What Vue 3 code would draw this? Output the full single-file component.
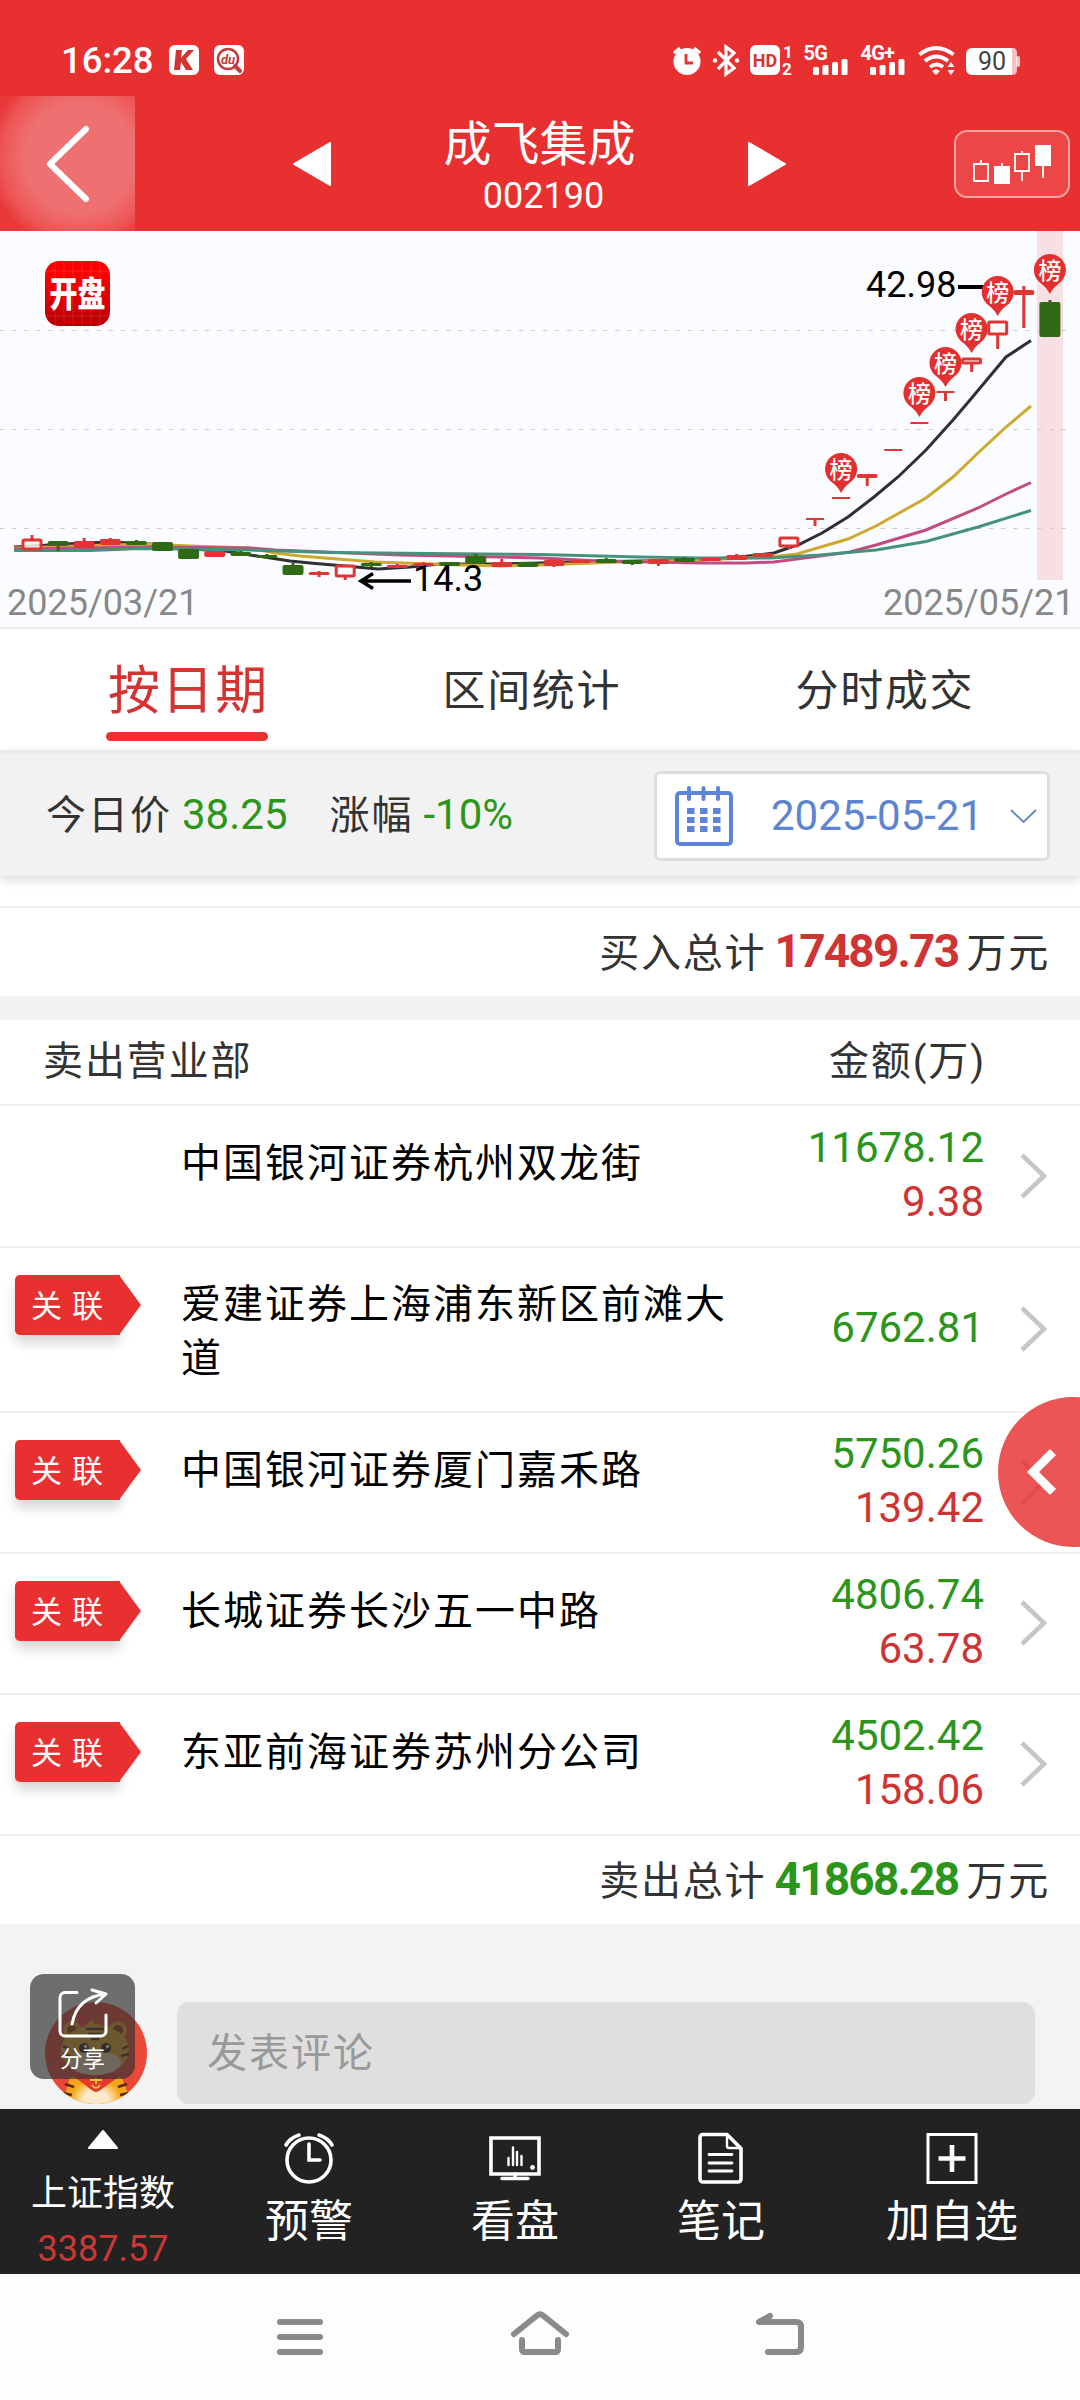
<script setup>
import { ref } from 'vue';

const tabs = ref(['按日期', '区间统计', '分时成交']);
const activeTab = ref(0);

const sellers = ref([
  { name: '中国银河证券杭州双龙街', sell: '11678.12', buy: '9.38', linked: false },
  { name: '爱建证券上海浦东新区前滩大道', sell: '6762.81', buy: '', linked: true, tall: true },
  { name: '中国银河证券厦门嘉禾路', sell: '5750.26', buy: '139.42', linked: true },
  { name: '长城证券长沙五一中路', sell: '4806.74', buy: '63.78', linked: true },
  { name: '东亚前海证券苏州分公司', sell: '4502.42', buy: '158.06', linked: true }
]);

// [type, top, bottom, wick top, wick bottom]
// r = red, g = green, h = hollow red, t = thin line
const candles = [
  ['h', 539, 550, 535, 539],
  ['g', 541, 546, 541, 551],
  ['r', 541, 548, 538, 548],
  ['r', 539, 545, 538, 545],
  ['g', 541, 545, 540, 545],
  ['g', 542, 551, 542, 551],
  ['g', 549, 559, 549, 559],
  ['r', 551, 557, 551, 557],
  ['g', 552, 556, 551, 556],
  ['g', 555, 558, 554, 559],
  ['g', 565, 575, 563, 575],
  ['r', 572, 575, 571, 577],
  ['h', 565, 577, 577, 580],
  ['g', 563, 566, 562, 567],
  ['r', 565, 568, 564, 568],
  ['r', 563, 566, 562, 566],
  ['g', 562, 566, 562, 566],
  ['g', 556, 564, 554, 564],
  ['r', 562, 567, 559, 567],
  ['g', 562, 567, 562, 567],
  ['r', 560, 566, 560, 567],
  ['r', 560, 563, 560, 563],
  ['g', 559, 563, 558, 563],
  ['g', 560, 564, 560, 565],
  ['r', 559, 564, 559, 566],
  ['g', 558, 562, 557, 562],
  ['r', 558, 561, 558, 561],
  ['r', 555, 560, 554, 560],
  ['r', 553, 557, 553, 557],
  ['h', 537, 547, 547, 549],
  ['t', 518, 520, 519, 526],
  ['t', 497, 499, 498, 498],
  ['r', 474, 478, 475, 486],
  ['t', 449, 451, 450, 450],
  ['t', 422, 424, 423, 423],
  ['t', 391, 393, 392, 401],
  ['h', 358, 364, 364, 372],
  ['h', 321, 335, 335, 349],
  ['r', 290, 295, 286, 328],
  ['g', 302, 337, 300, 337]
];

const centerX = (i) => 32 + 26.1 * i;
const halfWidth = (type) => (type === 't' ? 9 : 10.5);
const candleColor = (type) => (type === 'g' ? '#306a14' : '#e03535');

// index of the candle and the height of the pin above it
const pins = [
  [31, 469],
  [34, 393],
  [35, 363],
  [36, 329],
  [37, 292],
  [39, 270]
];

const averages = [
  {
    color: '#2f3033',
    points: '14,547 32,546 84,543 110,542 150,544 190,549 225,551 250,555 290,561 310,563 345,566 378,569 410,567 440,564 500,564 540,563 640,561 700,560 740,557 774,553 800,544 822,533 848,517 874,497 898,477 926,450 953,420 970,400 1006,357 1031,340.5'
  },
  {
    color: '#cfa92f',
    points: '14,548 110,545 150,544 190,546 250,548 275,553 300,556 350,560 375,562 430,564 500,566 540,565 620,562 700,560 770,557 797,554 848,539 876,526 926,498 953,477 978,453 1006,427 1031,406'
  },
  {
    color: '#c14b82',
    points: '14,549 150,547 250,548 275,550 400,555 500,557 540,558 600,561 700,563 746,563 774,562 850,552 876,545 926,530 978,508 1006,494 1031,482.5'
  },
  {
    color: '#46937c',
    points: '14,550.5 90,550.5 140,548.5 250,550 330,552.5 430,553.5 540,554.5 640,557 700,558 770,558 820,555 876,550 926,541.5 978,527 1031,510.5'
  }
];
</script>

<template>
  <div class="screen">
    <div class="status">
      <span class="time">16:28</span>
      <svg class="app_badge" width="30" height="30" viewBox="0 0 30 30">
        <rect width="30" height="30" rx="6" fill="#fff" />
        <path d="M7 5h6l-1 8 7-8h6l-8 9 7 11h-7l-5-8-1 8H5z" fill="#d23434" />
      </svg>
      <svg class="app_badge second" width="30" height="30" viewBox="0 0 30 30">
        <rect width="30" height="30" rx="6" fill="#fff" />
        <circle cx="14" cy="14" r="10" fill="none" stroke="#c43b3b" stroke-width="2.500" />
        <path d="M21 21l5 5" stroke="#c43b3b" stroke-width="4" stroke-linecap="round" />
        <text x="14" y="18.500" text-anchor="middle" class="du">du</text>
      </svg>
      <svg class="status_icons" width="360" height="46" viewBox="668 37 360 46">
        <g fill="#fff">
          <circle cx="687" cy="61.500" r="13.500" />
          <path d="M674 53l6-5M700 53l-6-5" stroke="#fff" stroke-width="3.200" />
          <path d="M686 54v9h7" stroke="#e83030" stroke-width="2.800" fill="none" />
          <path d="M718 52l16 16-8 6V47l8 6-16 16" stroke="#fff" stroke-width="3.200" fill="none" />
          <circle cx="715" cy="60.500" r="2.200" />
          <circle cx="737" cy="60.500" r="2.200" />
          <rect x="750" y="45" width="30" height="30" rx="6" />
          <text x="765" y="67" text-anchor="middle" class="hd">HD</text>
          <text x="783" y="57.500" class="sim">1</text>
          <text x="782" y="74.500" class="sim">2</text>
          <text x="803.500" y="60" class="net">5G</text>
          <text x="860.500" y="60" class="net">4G+</text>
          <g v-for="x in [813, 870]" :key="x">
            <rect :x="x" y="67" width="6" height="8" rx="1.500" />
            <rect :x="x + 9.5" y="65" width="6" height="10" rx="1.500" />
            <rect :x="x + 19" y="62" width="6" height="13" rx="1.500" />
            <rect :x="x + 28.5" y="59" width="6" height="16" rx="1.500" />
          </g>
          <g fill="none" stroke="#fff" stroke-width="4">
            <path d="M919.500 54.500q16.500-13 34 0" />
            <path d="M925 61q11.500-9 23 0" />
            <path d="M930 67q6.500-5 13 0" />
          </g>
          <path d="M932 71l4-2 4 2-4 4z" />
          <path d="M951 62l3.500 5h-7zM951 75l3.500-5h-7z" />
          <rect x="1010" y="48" width="7" height="27" rx="5" opacity="0.700" />
          <rect x="1016" y="56" width="4" height="11" rx="2" opacity="0.700" />
          <path d="M972 48h40v27h-40a6 6 0 0 1-6-6V54a6 6 0 0 1 6-6z" />
          <text x="992" y="70" text-anchor="middle" class="battery">90</text>
        </g>
      </svg>
    </div>

    <header class="header">
      <div class="back">
        <svg width="50" height="80" viewBox="0 0 50 80">
          <path d="M43 5L7 40l36 35" fill="none" stroke="#fff" stroke-width="6" stroke-linecap="round" stroke-linejoin="round" />
        </svg>
      </div>
      <svg class="prev" width="38" height="44" viewBox="0 0 38 44"><path d="M37 1v42L1 22z" fill="#fff" stroke="#fff" stroke-width="2" stroke-linejoin="round" /></svg>
      <div class="stock">
        <div class="stock_name">成飞集成</div>
        <div class="stock_code">002190</div>
      </div>
      <svg class="next" width="38" height="44" viewBox="0 0 38 44"><path d="M1 1v42l36-21z" fill="#fff" stroke="#fff" stroke-width="2" stroke-linejoin="round" /></svg>
      <div class="chart_button">
        <svg width="80" height="42" viewBox="0 0 80 42">
          <g fill="none" stroke="#fff" stroke-width="1.800">
            <path d="M2 21h14v17H2zM9 21v-4M43 11h14v17H43zM50 11V8M50 28v10" />
            <path d="M30 24v-4M71 23v12" />
          </g>
          <path d="M22 23h16v18H22zM63 2h16v21H63z" fill="#fff" />
        </svg>
      </div>
    </header>

    <svg class="chart" width="1080" height="396" viewBox="0 231 1080 396">
      <defs>
        <linearGradient id="logo" x1="0" y1="0" x2="0" y2="1">
          <stop offset="0.200" stop-color="#fb0000" />
          <stop offset="1" stop-color="#b80005" />
        </linearGradient>
      </defs>
      <rect x="1037" y="231" width="26" height="349" fill="#f8dfe4" />
      <line v-for="y in [330.5, 429.5, 528.5]" :key="y" x1="0" :y1="y" x2="1074" :y2="y" stroke="#cccdd2" stroke-width="1" stroke-dasharray="4.500 7.560" />
      <rect x="45" y="261" width="65" height="65" rx="14" fill="url(#logo)" />
      <path d="M55 261v65M64 261v65M73 261v65M82 261v65M91 261v65M100 261v65M45 271h65M45 316h65" stroke="#fff" stroke-opacity="0.120" />
      <text transform="translate(77.500 306.500) scale(1 1.250)" text-anchor="middle" class="logo_text">开盘</text>

      <polyline v-for="line in averages" :key="line.color" :points="line.points" fill="none" :stroke="line.color" stroke-width="3" />
      <g v-for="(c, i) in candles" :key="i">
        <line :x1="centerX(i)" :x2="centerX(i)" :y1="c[3]" :y2="c[4]" :stroke="candleColor(c[0])" stroke-width="3" />
        <rect v-if="c[0] === 'h'" :x="centerX(i) - 9" :y="c[1] + 1" width="18" :height="c[2] - c[1] - 2" rx="1" fill="#fbfcff" fill-opacity="0.800" :stroke="candleColor(c[0])" stroke-width="3" />
        <rect v-else :x="centerX(i) - halfWidth(c[0])" :y="c[1]" :width="halfWidth(c[0]) * 2" :height="c[2] - c[1]" :rx="c[0] === 't' ? 0 : 2" :fill="candleColor(c[0])" />
      </g>

      <line x1="958" x2="988" y1="287" y2="287" stroke="#000" stroke-width="4" />
      <text x="866" y="297" class="price">42.98</text>
      <path d="M411 581h-49M373 573.500l-12 7.500 12 7.500" fill="none" stroke="#000" stroke-width="3.500" />
      <text x="413" y="590.500" class="price">14.3</text>

      <g v-for="pin in pins" :key="pin[0]">
        <path :transform="`translate(${centerX(pin[0])} ${pin[1]})`" d="M-12 10.500C-7 15-3 18 0 24C3 18 7 15 12 10.500z" fill="#e32f2f" />
        <circle :cx="centerX(pin[0])" :cy="pin[1]" r="16" fill="#e32f2f" />
        <text :x="centerX(pin[0])" :y="pin[1] + 8.5" text-anchor="middle" class="pin_text">榜</text>
      </g>

      <text x="7" y="615" class="date_label">2025/03/21</text>
      <text x="1074.500" y="615" text-anchor="end" class="date_label">2025/05/21</text>
    </svg>

    <nav class="tabs">
      <div v-for="(tab, index) in tabs" :key="tab" class="tab" :class="{ active: index === activeTab }" @click="activeTab = index">
        <span>{{ tab }}</span>
      </div>
    </nav>

    <div class="info">
      <span class="label">今日价</span>
      <span class="value">38.25</span>
      <span class="label change">涨幅</span>
      <span class="value">-10%</span>
      <div class="date_box">
        <svg width="60" height="62" viewBox="0 0 60 62">
          <g fill="none" stroke="#5d84d8" stroke-width="4" stroke-linecap="round">
            <rect x="3" y="8" width="54" height="51" rx="3" />
            <path d="M15 3v11M29.500 3v11M44 3v11" />
          </g>
          <g fill="#5d84d8">
            <template v-for="y in [23, 32, 41]" :key="y">
              <rect v-for="x in [13, 26, 39]" :key="x" :x="x" :y="y" width="7.500" height="6" />
            </template>
          </g>
        </svg>
        <span class="date">2025-05-21</span>
        <svg class="arrow" width="27" height="16" viewBox="0 0 27 16">
          <path d="M1 2l12.500 12L26 2" fill="none" stroke="#5d84c8" stroke-width="1.800" />
        </svg>
      </div>
    </div>

    <div class="gap_row"></div>
    <div class="total">
      <span>买入总计</span><b class="red">17489.73</b><span>万元</span>
    </div>

    <div class="list_head">
      <span>卖出营业部</span>
      <span>金额(万)</span>
    </div>
    <div v-for="item in sellers" :key="item.name" class="row" :class="{ tall: item.tall, plain: !item.linked }">
      <div class="tag_cell">
        <div v-if="item.linked" class="tag">
          <span>关联</span>
        </div>
      </div>
      <p class="name">{{ item.name }}</p>
      <div class="amount">
        <div class="green">{{ item.sell }}</div>
        <div v-if="item.buy" class="red">{{ item.buy }}</div>
      </div>
      <svg class="more" width="28" height="48" viewBox="0 0 28 48">
        <path d="M2 3l22 21L2 45" fill="none" stroke="#c6c6c6" stroke-width="4.500" />
      </svg>
    </div>
    <div class="total">
      <span>卖出总计</span><b class="green">41868.28</b><span>万元</span>
    </div>

    <div class="comment">
      <svg class="avatar" width="102" height="102" viewBox="0 0 102 102">
        <defs>
          <clipPath id="round"><circle cx="51" cy="51" r="51" /></clipPath>
          <radialGradient id="belly"><stop offset="0.500" stop-color="#fbe9cc" /><stop offset="1" stop-color="#f6a91c" /></radialGradient>
        </defs>
        <g clip-path="url(#round)">
          <rect width="102" height="102" fill="#ea4937" />
          <path d="M17 102l8-26q27-14 52 0l10 26z" fill="#f4a51b" />
          <ellipse cx="51" cy="99" rx="25" ry="22" fill="url(#belly)" />
          <path d="M28 74q23-9 47 0L54 89q-3 2-6 0z" fill="#e33a2a" />
          <path d="M45 78h12M47 83q4 6 8 0M51 76v6" stroke="#f7ba39" stroke-width="2" fill="none" />
          <circle cx="27" cy="28" r="9" fill="#f3a71f" />
          <circle cx="73" cy="28" r="9" fill="#f3a71f" />
          <circle cx="27" cy="28" r="5" fill="#8b3d12" />
          <circle cx="73" cy="28" r="5" fill="#8b3d12" />
          <path d="M40 25q2-5 9-8l-1 5 6-1-1 5z" fill="#f3a71f" />
          <ellipse cx="50" cy="48" rx="34" ry="25" fill="#e9ab2c" />
          <ellipse cx="50" cy="61" rx="26" ry="12" fill="#f3d9b5" />
          <path d="M41 27h18M43 32h14M46 37h8M77 47l6-3M76 54l8-2M24 47l-6-3M25 54l-7-2M20 82l9 3M82 82l-9 3M18 91l9 2M84 91l-9 2" stroke="#5a2a10" stroke-width="2.500" />
          <circle cx="39" cy="46" r="5" fill="#32201a" />
          <circle cx="61" cy="46" r="5" fill="#32201a" />
          <circle cx="40.500" cy="44.500" r="1.800" fill="#fff" />
          <circle cx="62.500" cy="44.500" r="1.800" fill="#fff" />
          <path d="M46 54h8l-4 4z" fill="#70371a" />
        </g>
      </svg>
      <div class="input">发表评论</div>
      <div class="share">
        <svg width="54" height="54" viewBox="0 0 54 54">
          <g fill="none" stroke="#fff" stroke-width="3" stroke-linecap="round" stroke-linejoin="round">
            <path d="M21 6.500H9a5 5 0 0 0-5 5V45a5 5 0 0 0 5 5h36a5 5 0 0 0 5-5V29" />
            <path d="M16 38Q21 11 50 8M36 4l14 4-10 9" />
          </g>
        </svg>
        <span>分享</span>
      </div>
    </div>

    <footer class="toolbar">
      <div class="tool index">
        <svg width="30" height="19" viewBox="0 0 30 19"><path d="M15 1l14 17H1z" fill="#fff" stroke="#fff" stroke-width="2" stroke-linejoin="round" /></svg>
        <span class="index_name">上证指数</span>
        <span class="index_value">3387.57</span>
      </div>
      <div class="tool">
        <svg width="52" height="52" viewBox="0 0 52 52">
          <g fill="none" stroke="#fff" stroke-width="3.600" stroke-linecap="round">
            <circle cx="26" cy="28" r="22" />
            <path d="M26 12v16h11M3 13Q7 6 16 3M49 13Q45 6 36 3" />
          </g>
        </svg>
        <span>预警</span>
      </div>
      <div class="tool">
        <svg width="52" height="52" viewBox="0 0 52 52">
          <g fill="none" stroke="#fff" stroke-width="3.600" stroke-linecap="round">
            <path d="M2 6h48v36H2z" />
            <path d="M26 42v4M13 46.500h26" />
            <path d="M19.500 26v7M24 15.500v17.500M28 20v13M32.500 24v9" stroke-width="2.400" />
          </g>
          <circle cx="43.500" cy="35.500" r="2.400" fill="#fff" />
        </svg>
        <span>看盘</span>
      </div>
      <div class="tool">
        <svg width="52" height="52" viewBox="0 0 52 52">
          <g fill="none" stroke="#fff" stroke-width="3.600" stroke-linecap="round" stroke-linejoin="round">
            <path d="M8 2.500h24l14 14V47a3 3 0 0 1-3 3H8a3 3 0 0 1-3-3V5.500a3 3 0 0 1 3-3z" />
            <path d="M32 3v11a2 2 0 0 0 2 2h11" stroke-width="2.400" />
            <path d="M14 22.500h23M14 31h23M14 39h23" stroke-width="2.800" />
          </g>
        </svg>
        <span>笔记</span>
      </div>
      <div class="tool add">
        <svg width="52" height="52" viewBox="0 0 52 52">
          <path d="M2 2.500h48v48H2z" fill="none" stroke="#fff" stroke-width="3" />
          <path d="M26 13v27M12.500 26.500h27" stroke="#fff" stroke-width="4.600" />
        </svg>
        <span>加自选</span>
      </div>
    </footer>

    <div class="system">
      <svg width="60" height="60" viewBox="0 0 60 60">
        <path d="M10 15h40M10 30h40M10 45h40" />
      </svg>
      <svg width="60" height="60" viewBox="0 0 60 60">
        <path d="M4 27L27 8.500Q30 6 33 8.500L56 27M12 33v9q0 3 3 3h30q3 0 3-3v-9" />
      </svg>
      <svg width="60" height="60" viewBox="0 0 60 60">
        <path d="M20 9L9 15h37q5 0 5 5v20q0 5-5 5H18" />
      </svg>
    </div>

    <div class="drawer">
      <svg width="34" height="48" viewBox="0 0 34 48"><path d="M28 4L8 24l20 20" fill="none" stroke="#fff" stroke-width="8.500" /></svg>
    </div>
  </div>
</template>

<style>
body {
  margin: 0;
}
</style>

<style scoped>
.screen {
  position: relative;
  display: flex;
  flex-direction: column;
  width: 1080px;
  height: 2400px;
  overflow: hidden;
  background: #fff;
  color: #333;
  font-family: Roboto, "Noto Sans CJK SC", sans-serif;
  font-size: 40px;
}

.status {
  display: flex;
  align-items: center;
  box-sizing: border-box;
  height: 96px;
  padding: 24px 52px 0 61px;
  background: #e83030;
  color: #fff;
}
.time {
  width: 92px;
  font-size: 36.500px;
  font-weight: 500;
  white-space: nowrap;
}
.app_badge {
  margin-left: 16px;
}
.app_badge.second {
  margin-left: 15px;
}
.status_icons {
  margin-left: auto;
  overflow: visible;
}
.du {
  font: italic bold 13px Roboto, sans-serif;
  fill: #c43b3b;
}
.hd {
  font: 700 18px Roboto, sans-serif;
  fill: #d63434;
}
.sim {
  font: bold 17px Roboto, sans-serif;
}
.net {
  font: bold 20px Roboto, sans-serif;
  letter-spacing: -0.800px;
}
.battery {
  font: 25px Roboto, sans-serif;
  fill: #444;
}

.header {
  display: flex;
  align-items: center;
  height: 135px;
  background: #e83030;
  color: #fff;
}
.back {
  display: flex;
  align-items: center;
  justify-content: center;
  width: 135px;
  height: 135px;
  background: radial-gradient(circle 92px at 80px 62px, #ef7070 60%, #ed5555 85%, #e93838);
}
.prev {
  margin-left: 158px;
}
.stock {
  width: 417px;
  padding-top: 6px;
  text-align: center;
}
.stock_name {
  font-size: 48px;
  line-height: 58px;
}
.stock_code {
  margin-left: 8px;
  font-size: 36px;
  line-height: 44px;
}
.chart_button {
  display: flex;
  align-items: center;
  justify-content: center;
  box-sizing: border-box;
  width: 116px;
  height: 68px;
  margin-left: 168px;
  border: 2px solid #f6a3a3;
  border-radius: 13px;
  background: #ec4646;
}

.chart {
  display: block;
  flex: none;
  background: #fbfcff;
}
.price {
  font: 36px Roboto, sans-serif;
}
.date_label {
  font: 36px Roboto, sans-serif;
  fill: #888;
}
.pin_text {
  font: 500 23px "Noto Sans CJK SC", sans-serif;
  fill: #fff;
}
.logo_text {
  font: 900 28px "Noto Sans CJK SC", sans-serif;
  fill: #fff;
}

.tabs {
  display: flex;
  justify-content: space-between;
  box-sizing: border-box;
  height: 123px;
  padding: 0 106px;
  border-top: 2px solid #ececef;
}
.tab {
  display: flex;
  align-items: center;
  position: relative;
  box-sizing: border-box;
  padding-bottom: 6px;
  font-size: 43px;
  letter-spacing: 1.600px;
  white-space: nowrap;
}
.tab.active {
  width: 162px;
  padding-bottom: 7px;
  padding-left: 2px;
  color: #d53232;
  font-size: 52px;
  letter-spacing: 1.600px;
}
.tab.active::after {
  content: "";
  position: absolute;
  left: 0;
  bottom: 9px;
  width: 162px;
  height: 9px;
  border-radius: 5px;
  background: #e83030;
}

.info {
  display: flex;
  align-items: center;
  box-sizing: border-box;
  height: 126px;
  padding: 2px 30px 0 46px;
  border-top: 4px solid #ebebeb;
  background: #f2f2f2;
  box-shadow: 0 4px 10px rgba(0, 0, 0, 0.14);
}
.label {
  padding-bottom: 8px;
  letter-spacing: 2px;
}
.value {
  margin-left: 10px;
  padding-bottom: 4px;
  color: #2b951c;
  font-size: 42px;
}
.change {
  margin-left: 42px;
}
.date_box {
  display: flex;
  align-items: center;
  box-sizing: border-box;
  width: 396px;
  height: 90px;
  margin-left: auto;
  padding-left: 17px;
  border: 3px solid #dadde1;
  border-radius: 6px;
  background: #fff;
  color: #5d84d0;
}
.date {
  margin-left: 37px;
  padding-bottom: 1px;
  font-size: 42px;
}
.arrow {
  margin-left: 27px;
}

.gap_row {
  height: 30px;
}
.total {
  display: flex;
  align-items: center;
  justify-content: flex-end;
  box-sizing: border-box;
  height: 90px;
  padding: 0 30px 4px 0;
  border-top: 2px solid #efefef;
  letter-spacing: 1.800px;
}
.total b {
  width: 200px;
  padding-top: 2px;
  font-size: 46px;
  font-weight: 700;
  letter-spacing: -1.800px;
  text-align: center;
}

.list_head {
  display: flex;
  justify-content: space-between;
  align-items: center;
  box-sizing: border-box;
  height: 108px;
  padding: 0 94px 8px 43px;
  border-top: 24px solid #f2f2f2;
  letter-spacing: 1.900px;
}
.row {
  display: flex;
  align-items: center;
  box-sizing: border-box;
  height: 141px;
  border-top: 2px solid #efefef;
}
.row.plain {
  height: 142px;
}
.row.tall {
  height: 165px;
}
.tag_cell {
  align-self: flex-start;
  flex: none;
  width: 181px;
  padding-top: 27px;
}
.tag {
  display: flex;
  align-items: center;
  position: relative;
  box-sizing: border-box;
  width: 105px;
  height: 60px;
  margin-left: 15px;
  padding: 0 0 4px 16px;
  border-radius: 5px 0 0 5px;
  background: #e83030;
  box-shadow: 0 8px 12px rgba(0, 0, 0, 0.16);
  color: #fff;
  font-size: 31px;
  letter-spacing: 10px;
  white-space: nowrap;
}
.tag::after {
  content: "";
  position: absolute;
  left: 104px;
  top: 0;
  border-style: solid;
  border-width: 30px 0 30px 22px;
  border-color: transparent transparent transparent #e83030;
}
.tag span {
  position: relative;
  z-index: 1;
}
.name {
  align-self: flex-start;
  width: 552px;
  margin: 31px 0 0;
  color: #000;
  letter-spacing: 2px;
  line-height: 54px;
}
.tall .name {
  margin-top: 30px;
}
.amount {
  width: 251px;
  margin-top: -3px;
  font-size: 42px;
  line-height: 54px;
  text-align: right;
}
.more {
  margin: -1px 0 0 36px;
}
.green {
  color: #2b951c;
}
.red {
  color: #cf3434;
}

.comment {
  display: flex;
  position: relative;
  box-sizing: border-box;
  height: 185px;
  padding: 78px 45px 5px;
  background: #f3f3f3;
}
.input {
  display: flex;
  align-items: center;
  box-sizing: border-box;
  width: 858px;
  height: 102px;
  margin-left: 30px;
  padding: 0 0 7px 30px;
  border-radius: 12px;
  background: #dfdfdf;
  color: #999;
  letter-spacing: 2px;
}
.share {
  display: flex;
  flex-direction: column;
  align-items: center;
  position: absolute;
  left: 30px;
  top: 50px;
  box-sizing: border-box;
  width: 105px;
  height: 105px;
  padding-top: 12px;
  border-radius: 14px;
  background: rgba(50, 50, 50, 0.690);
  color: #fff;
  font-size: 22.500px;
  line-height: 38px;
}

.toolbar {
  display: flex;
  height: 165px;
  background: #222;
  color: #fff;
}
.tool {
  display: flex;
  flex-direction: column;
  align-items: center;
  box-sizing: border-box;
  width: 206px;
  padding-top: 23px;
  font-size: 44px;
  line-height: 76px;
}
.tool svg {
  flex: none;
}
.tool.index {
  padding-top: 21px;
}
.tool.add {
  width: 256px;
}
.index_name {
  margin-top: 23px;
  font-size: 36px;
  line-height: 44px;
}
.index_value {
  margin-top: 10px;
  color: #cb3836;
  font-size: 36px;
  line-height: 46px;
}

.system {
  display: flex;
  align-items: center;
  justify-content: center;
  gap: 180px;
  height: 126px;
  background: #fdfdfd;
}
.system path {
  fill: none;
  stroke: #8a8a8a;
  stroke-width: 6;
  stroke-linecap: round;
  stroke-linejoin: round;
}

/* floating handle that overlaps the list */
.drawer {
  display: flex;
  align-items: center;
  position: absolute;
  left: 998px;
  top: 1397px;
  box-sizing: border-box;
  width: 150px;
  height: 150px;
  padding-left: 27px;
  border-radius: 50%;
  background: rgba(232, 48, 48, 0.820);
}
</style>
